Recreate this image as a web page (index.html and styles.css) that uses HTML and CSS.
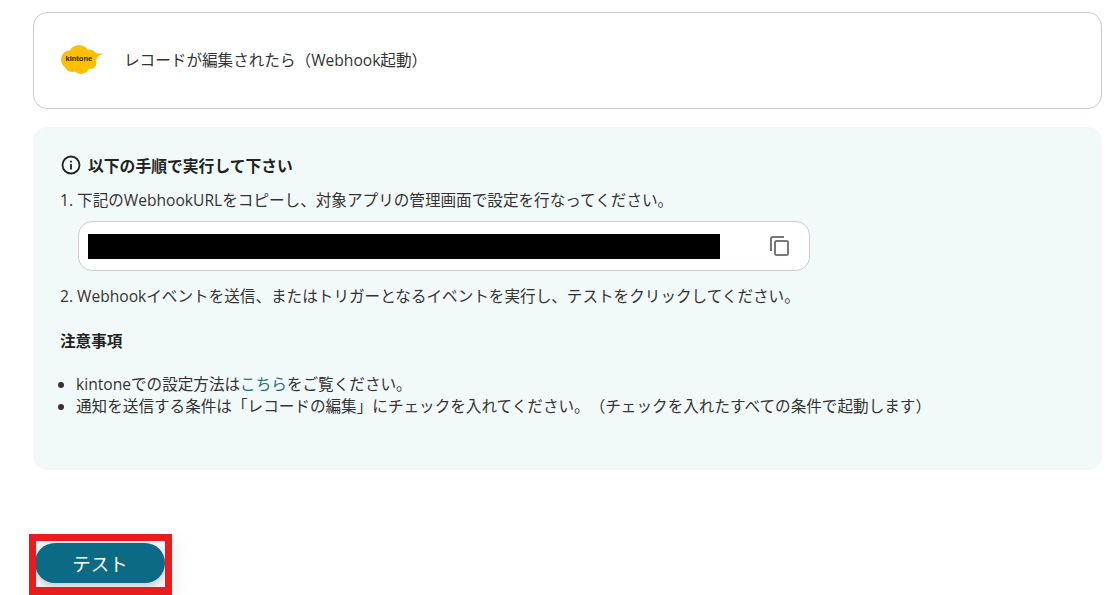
FILE: index.html
```html
<!DOCTYPE html>
<html lang="ja">
<head>
<meta charset="utf-8">
<title>kintone trigger</title>
<link rel="stylesheet" href="styles.css">
</head>
<body>
<main class="page">
  <section class="trigger-card">
    <svg class="kintone-logo" viewBox="0 0 44 32" width="44" height="32" aria-hidden="true">
      <g fill="#ffbe00">
        <ellipse cx="8" cy="15.500" rx="8" ry="9"/>
        <ellipse cx="18" cy="10" rx="10" ry="9"/>
        <ellipse cx="28" cy="13" rx="8" ry="7.500"/>
        <ellipse cx="29" cy="19" rx="6.500" ry="6"/>
        <ellipse cx="20" cy="21" rx="9" ry="9"/>
        <ellipse cx="11" cy="22" rx="7" ry="6"/>
        <path d="M31 7.500C35 10 39 9.500 43 9.500 39 10.500 36.500 12.500 35 15z"/>
      </g>
      <text class="kintone-word" x="4.500" y="17">kintone</text>
    </svg>
    <span class="trigger-title">レコードが編集されたら（Webhook起動）</span>
  </section>

  <section class="info-panel">
    <h2 class="info-heading">
      <svg class="info-icon" viewBox="0 0 20 20" width="20" height="20" aria-hidden="true">
        <circle cx="10" cy="10" r="8.500" fill="none" stroke="#222" stroke-width="1.800"/>
        <rect x="9.100" y="9" width="1.800" height="5.500" fill="#222"/>
        <rect x="9.100" y="5.700" width="1.800" height="1.800" fill="#222"/>
      </svg>
      以下の手順で実行して下さい
    </h2>
    <p class="step">1. 下記のWebhookURLをコピーし、対象アプリの管理画面で設定を行なってください。</p>
    <div class="url-box">
      <div class="url-mask"></div>
      <svg class="copy-icon" viewBox="0 0 24 24" width="24" height="24" aria-hidden="true">
        <path fill="none" stroke="#777" stroke-width="2" d="M4 17V5a2 2 0 0 1 2-2h11"/>
        <rect x="8" y="7" width="13" height="14" rx="1.500" fill="none" stroke="#777" stroke-width="2"/>
      </svg>
    </div>
    <p class="step">2. Webhookイベントを送信、またはトリガーとなるイベントを実行し、テストをクリックしてください。</p>
    <h3 class="notes-heading">注意事項</h3>
    <ul class="notes">
      <li>kintoneでの設定方法は<a class="link" href="#">こちら</a>をご覧ください。</li>
      <li>通知を送信する条件は「レコードの編集」にチェックを入れてください。（チェックを入れたすべての条件で起動します）</li>
    </ul>
  </section>

  <div class="action">
    <div class="highlight">
      <button class="test-button" type="button">テスト</button>
    </div>
  </div>
</main>
</body>
</html>
```
FILE: styles.css
```css
* { box-sizing: border-box; }
html, body { margin: 0; height: 595px; overflow: hidden; background: #fff; }
body {
  font-family: "Open Sans", "Noto Sans CJK JP", sans-serif;
  font-size: 15.6px;
  color: #333;
  text-spacing-trim: space-all;
}
.page { padding: 12px 9px 0 33px; }
.trigger-card {
  height: 97px;
  border: 1px solid #ccc;
  border-radius: 14px;
  display: flex;
  align-items: center;
  padding-left: 27px;
  gap: 19px;
}
.kintone-logo { flex: none; margin-top: -1px; }
.kintone-word {
  font-family: "Liberation Sans", sans-serif;
  font-size: 7.500px;
  font-weight: 700;
  fill: #2a2000;
}
.trigger-title { margin-top: -2px; }
.info-panel {
  margin-top: 18px;
  height: 343px;
  background: #f2faf9;
  border-radius: 14px;
  padding: 27px 27px 0;
}
.info-heading {
  margin: 0;
  font-size: 15.800px;
  font-weight: 700;
  color: #222;
  display: flex;
  align-items: center;
  gap: 7px;
  height: 22px;
}
.info-icon { flex: none; margin-left: 1px; }
.step { margin: 0; line-height: 22px; }
.info-heading + .step { margin-top: 13px; }
.url-box {
  width: 732px;
  height: 50px;
  margin: 10px 0 14px 18px;
  background: #fff;
  border: 1px solid #ccc;
  border-radius: 14px;
  display: flex;
  align-items: center;
  justify-content: space-between;
  padding: 0 18px 0 9px;
}
.url-mask { width: 632px; height: 25px; background: #000; }
.copy-icon { flex: none; }
.notes-heading {
  margin: 23px 0 0;
  font-size: 15.600px;
  font-weight: 700;
  line-height: 22px;
  color: #222;
}
.notes { margin: 21px 0 0; padding: 0 0 0 16px; }
.notes li { line-height: 22px; }
.link { color: #1c6f8a; text-decoration: none; }
.action { margin-top: 64px; margin-left: -4px; }
.highlight {
  width: 143px;
  height: 61px;
  border: 7px solid #e81c1c;
  border-bottom-width: 8px;
  box-shadow: 5px 5px 14px rgba(0, 0, 0, .06);
  background: #f3f4f5;
  padding-top: 2px;
  overflow: hidden;
}
.test-button {
  display: block;
  width: 130px;
  height: 40px;
  margin-left: -1px;
  border: 0;
  border-radius: 20px;
  background: #0b6b85;
  color: #fff;
  font: inherit;
  font-size: 18.500px;
  box-shadow: 0 3px 7px rgba(0, 0, 0, .18);
}
```
